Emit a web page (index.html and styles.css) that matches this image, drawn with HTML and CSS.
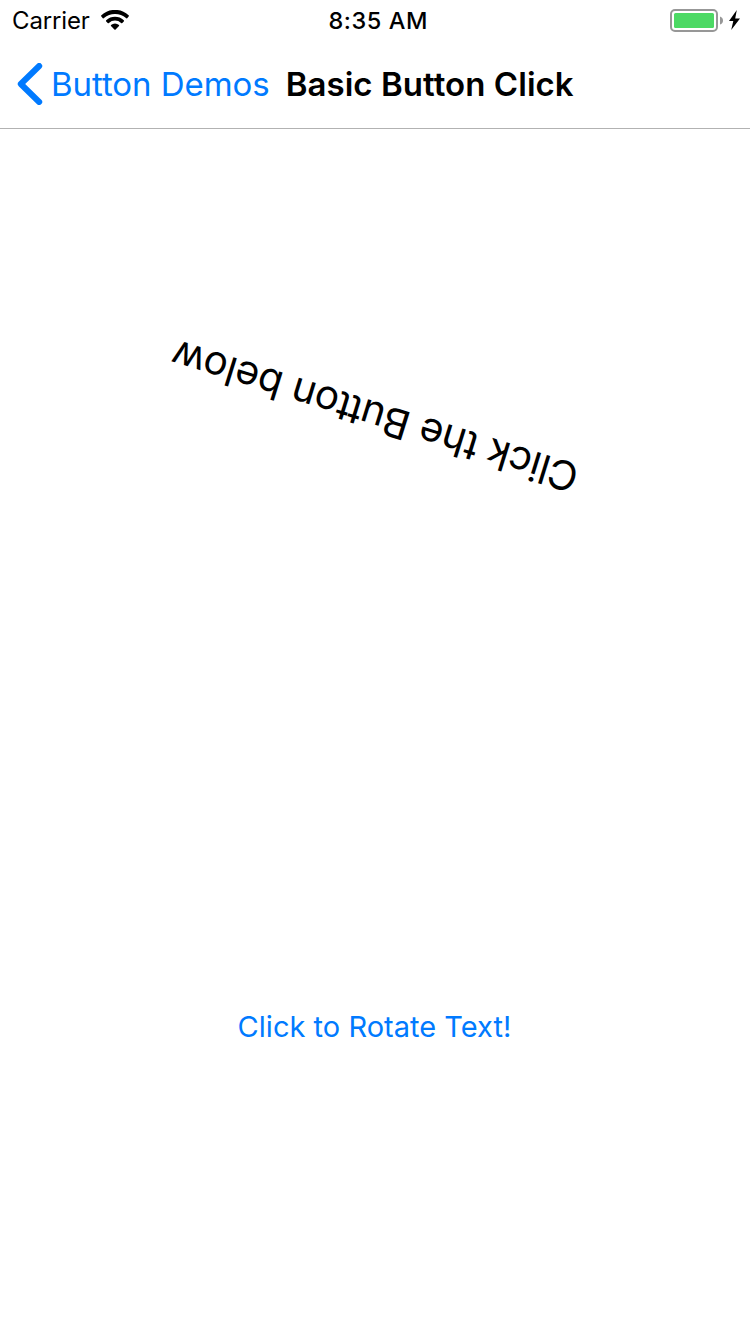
FILE: index.html
```html
<!DOCTYPE html>
<html lang="en">
<head>
<meta charset="utf-8">
<title>Basic Button Click</title>
<link rel="stylesheet" href="styles.css">
</head>
<body>
<div class="screen">
  <div class="status">
    <div class="carrier"><span class="carrier-name">Carrier</span>
      <svg class="wifi" width="28" height="20" viewBox="0 0 28 20"><path d="M.4 5.2A20 20 0 0 1 27.6 5.2Q28.3 5.9 27.6 6.6L26.2 8.2Q25.6 8.6 25 8.1A16.5 16.5 0 0 0 3 8.1Q2.4 8.6 1.8 8.2L.4 6.6Q-.3 5.9 .4 5.2Z"/><path d="M5.2 10.2A13 13 0 0 1 22.8 10.2Q23.4 10.8 22.8 11.4L21.3 12.9Q20.7 13.4 20.1 12.9A9.2 9.2 0 0 0 7.9 12.9Q7.3 13.4 6.7 12.9L5.2 11.4Q4.6 10.8 5.2 10.2Z"/><path d="M10 15.1A6 6 0 0 1 18 15.1Q18.4 15.6 18 16.1L14.6 19.5Q14 20 13.4 19.5L10 16.1Q9.6 15.6 10 15.1Z"/></svg>
    </div>
    <div class="time"><span class="time-text">8:35 AM</span></div>
    <div class="power">
      <svg width="70" height="24" viewBox="0 0 70 24"><rect x="1" y="2" width="46" height="21" rx="4" fill="#fff" stroke="#979797" stroke-width="2"/><rect x="4" y="5" width="40" height="15" rx="1.5" fill="#4cd964"/><path d="M50 8.5Q53 9.5 53 12.5T50 16.5Z" fill="#979797"/><path d="M66.8 2L59 13H63.3L61.2 22L70 10.5H65.2Z"/></svg>
    </div>
  </div>
  <header class="nav">
    <svg class="chevron" width="26" height="42" viewBox="0 0 26 42"><path d="M22.2 3L3.8 21L22.2 39"/></svg>
    <a class="back"><span class="back-text">Button Demos</span></a>
    <h1 class="title"><span class="title-text">Basic Button Click</span></h1>
  </header>
  <main class="content">
    <div class="label"><span class="label-text">Click the Button below</span></div>
    <button class="rotate"><span class="rotate-text">Click to Rotate Text!</span></button>
  </main>
</div>
</body>
</html>
```
FILE: styles.css
```css
body { margin: 0; background: #fff; color: #000; font-family: Inter, "Liberation Sans", sans-serif; }
.screen { width: 750px; height: 1334px; overflow: hidden; }
.status { height: 40px; display: grid; grid-template-columns: 328.5px 100px 1fr; align-items: center; font-size: 24px; }
.carrier { display: flex; align-items: center; padding-left: 12px; gap: 11px; letter-spacing: -0.15px; }
.time { font-size: 23.5px; font-weight: 500; white-space: nowrap; letter-spacing: 0.55px; }
.power { display: flex; justify-content: flex-end; padding-right: 10px; }
.nav { height: 88px; display: flex; align-items: center; border-bottom: 1px solid #b2b2b2; padding-left: 17px; white-space: nowrap; }
.chevron path { fill: none; stroke: #007aff; stroke-width: 6; stroke-linecap: round; stroke-linejoin: round; }
.back { color: #007aff; font-size: 33px; letter-spacing: -0.05px; margin: 0 0 0 8px; }
.title { font-size: 33px; font-weight: 600; letter-spacing: 0.05px; margin: 0 0 0 16px; }
.content { display: flex; flex-direction: column; align-items: center; padding-top: 262px; }
.label { font-size: 40.5px; line-height: 50px; letter-spacing: -0.21px; transform: rotate(197.3deg); white-space: nowrap; }
.rotate { border: 0; background: none; padding: 0 1px 0 0; color: #007aff; font: 29px/40px Inter, "Liberation Sans", sans-serif; letter-spacing: 0.02px; margin-top: 566px; }
```
